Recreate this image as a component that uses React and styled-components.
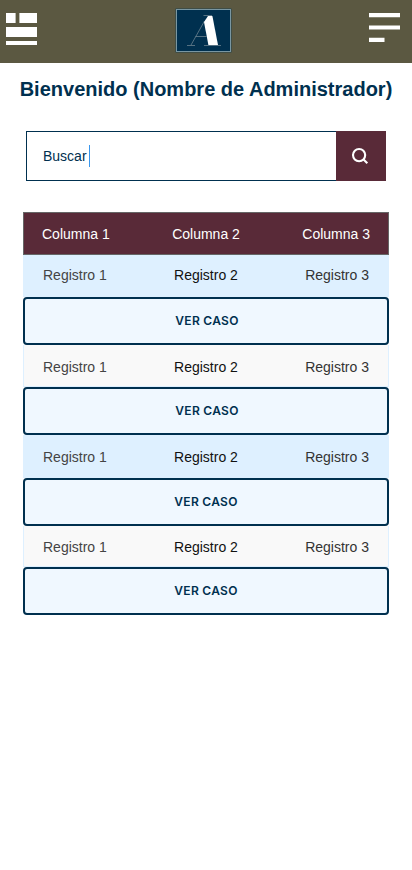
import React from 'react';
import styled, { createGlobalStyle } from 'styled-components';

const GlobalStyle = createGlobalStyle`
  * { box-sizing: border-box; }
  body { margin: 0; background: #fff; font-family: "Liberation Sans", Arial, sans-serif; }
`;

const Page = styled.div`
  width: 412px;
  min-height: 870px;
  background: #fff;
`;

const TopBar = styled.header`
  height: 63px;
  background: #5b5841;
  display: grid;
  grid-template-columns: 169px 57px 1fr;
  padding: 8px 12px 0 6px;
`;

const IconButton = styled.button`
  display: block;
  border: 0;
  padding: 0;
  height: 32px;
  background: none;
  margin-top: 5px;
  justify-self: ${({ $align }) => $align};
  svg { display: block; }
`;

const Logo = styled.svg`
  display: block;
`;

const Title = styled.h1`
  margin: 14px 0 0;
  font-size: 20px;
  line-height: 24px;
  font-weight: 700;
  text-align: center;
  white-space: nowrap;
  color: #00304f;
`;

const SearchBar = styled.div`
  display: flex;
  width: 360px;
  height: 50px;
  margin: 30px 0 31px 26px;
`;

const SearchField = styled.div`
  flex: 1;
  display: flex;
  align-items: center;
  padding-left: 16px;
  border: 1px solid #00304f;
  border-right: 0;
  font-size: 14px;
  color: #00304f;
`;

const Caret = styled.span`
  width: 1px;
  height: 22px;
  margin-left: 2px;
  background: ${({ $color }) => $color};
`;

const SearchButton = styled.button`
  width: 50px;
  border: 0;
  padding: 0 2px 0 0;
  display: flex;
  align-items: center;
  justify-content: center;
  background: #592a38;
`;

const Table = styled.section`
  width: 366px;
  margin-left: 23px;
  font-size: 14px;
`;

const TableHead = styled.div`
  height: 43px;
  display: flex;
  justify-content: space-between;
  padding: 13px 18px 0;
  line-height: 16px;
  background: #592a38;
  border: 1px solid #666;
  color: #fff;
`;

const Row = styled.div`
  height: ${({ $height }) => $height}px;
  display: flex;
  justify-content: space-between;
  padding: ${({ $top }) => $top}px 19px 0;
  line-height: 16px;
  background: ${({ $tinted }) => ($tinted ? '#def0ff' : '#f9f9f9')};
  border: 1px solid #def0ff;
  border-width: 0 1px 1px;
`;

const Cell = styled.span`
  color: ${({ $color }) => $color};
`;

const CaseButton = styled.button`
  display: block;
  width: 100%;
  height: 48px;
  padding: 0 0 2px ${({ $shift }) => $shift}px;
  border: 2px solid #00304f;
  border-radius: 4px;
  background: #f0f8ff;
  color: #00304f;
  font-family: Inter, "Liberation Sans", sans-serif;
  font-size: 12px;
  font-weight: 600;
  letter-spacing: 0.3px;
`;

const rows = [
  { height: 42, top: 12, shift: 2 },
  { height: 42, top: 14, shift: 2 },
  { height: 43, top: 14, shift: 0 },
  { height: 41, top: 13, shift: 0 },
];
const cellColors = ['#444', '#111', '#333'];

export default function App() {
  return (
    <Page>
      <GlobalStyle />
      <TopBar>
        <IconButton $align="start" aria-label="Panel">
          <svg width="31" height="32" fill="#fff">
            <path d="M0 0h9.6v10H0zM13.4 0H31v10H13.4zM0 14h31v10H0zM0 28h31v4H0z" />
          </svg>
        </IconButton>
        <Logo width="57" height="45" viewBox="0 0 57 45">
          <rect x=".5" y=".5" width="56" height="44" fill="#24434c" />
          <rect x="1.5" y="1.5" width="54" height="42" fill="#00304f" stroke="#7896a2" />
          <path d="M29.5 13L16 37M12 37.5h8M20.5 28.5h11M29 37.5h17M28.5 7.5h8.5" fill="none" stroke="#718793" strokeWidth=".75" />
          <path d="M33 8h4.4L43 37H33.4L29 14z" fill="#fff" />
        </Logo>
        <IconButton $align="end" aria-label="Menú">
          <svg width="31" height="32" fill="#fff">
            <path d="M0 0h31v4.3H0zM0 12.4h31v4.2H0zM0 24.7h15.5V29H0z" />
          </svg>
        </IconButton>
      </TopBar>
      <Title>Bienvenido (Nombre de Administrador)</Title>
      <SearchBar>
        <SearchField>Buscar<Caret $color="#3997ed" /></SearchField>
        <SearchButton aria-label="Buscar">
          <svg width="18" height="18" viewBox="0 0 18 18" fill="none" stroke="#fff" strokeWidth="2.1">
            <circle cx="8.1" cy="8.1" r="6.1" />
            <path d="M12.3 12.3l4 4" />
          </svg>
        </SearchButton>
      </SearchBar>
      <Table>
        <TableHead>
          {[1, 2, 3].map((n) => <span key={n}>Columna {n}</span>)}
        </TableHead>
        {rows.map(({ height, top, shift }, i) => (
          <React.Fragment key={i}>
            <Row $height={height} $top={top} $tinted={i % 2 === 0}>
              {cellColors.map((color, n) => <Cell key={n} $color={color}>Registro {n + 1}</Cell>)}
            </Row>
            <CaseButton $shift={shift}>VER CASO</CaseButton>
          </React.Fragment>
        ))}
      </Table>
    </Page>
  );
}
